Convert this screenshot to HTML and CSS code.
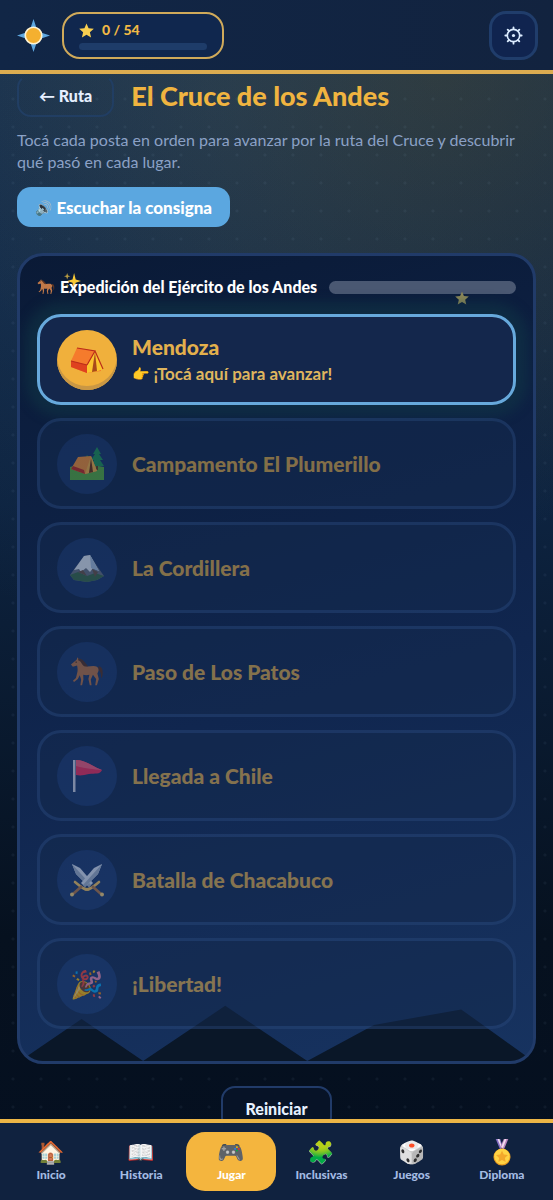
FILE: index.html
```html
<!DOCTYPE html>
<html lang="es">
<head>
<meta charset="utf-8">
<meta name="viewport" content="width=device-width, initial-scale=1">
<title>El Cruce de los Andes</title>
<link rel="stylesheet" href="styles.css">
</head>
<body>
<svg class="defs" aria-hidden="true">
  <defs>
    <symbol id="horse" viewBox="0 0 36 32">
      <path d="M30 10c4 0 5 4 4.500 9-.2 2-1 3-1.500 4 0-4-.5-8-3-9Z" fill="#5a3424"/>
      <path d="M1 8 7 3l1-2.500L9.500 3c3 1.500 5 5 8 7 3 .5 8-1.500 11 .5 2.500 2 2 5 .5 7l1.500 6-2 6.500h-1.800l1-6.500-3.400-4.500-2.300 5 .8 6h-1.800l-1.500-6.500 1-4.500c-2 .6-4.500.6-6.500 0l.2 5-1.400 6h-1.800l.8-6-1.500-4.500-2 4-4 3-1.200-1.200 3.200-3 1.200-5C8.500 14.500 8 11.500 7.500 9L3 10.500Z" fill="#c07848"/>
      <path d="M9 1.800c4.500.4 7 4.200 10 8.200-2.500.8-5 0-6.500-2.800C11.500 5.500 10.500 4 8.500 3.500Z" fill="#5a3424"/>
      <circle cx="6.500" cy="5.500" r=".7" fill="#20120c"/>
    </symbol>
    <symbol id="tent" viewBox="0 0 34 28">
      <path d="M7 2 25 5 31 25 17 27 1 21Z" fill="#f4762b"/>
      <path d="M7 2 25 5 17 19 1 15Z" fill="#f57b2c"/>
      <path d="M1 15 17 19V27L1 21Z" fill="#df421f"/>
      <path d="M25 5 33 23 28 25 17 27V19Z" fill="#fbc52e"/>
      <path d="M25 6 27 25 22 26Z" fill="#a84a1b"/>
      <path d="M7 2 25 5 17 19M1 15 17 19M25 5 33 23" fill="none" stroke="#bb2d1a" stroke-width="1.200"/>
    </symbol>
    <symbol id="camp" viewBox="0 0 34 34">
      <path d="M0 20c10-3 24-2 34 0v13H0Z" fill="#5cb544"/>
      <path d="M26 15h2v8h-2Z" fill="#6b4325"/>
      <path d="M27 0 31 7h-2l4 6h-3l4 6H20l4-6h-3l4-6h-2Z" fill="#219c5e"/>
      <path d="M17 8 22 14h-8Z" fill="#219c5e"/>
      <path d="M8 10 21 9 27 24 15 27 1 22Z" fill="#ff9838"/>
      <path d="M1 22 15 27 14 23 3 19Z" fill="#c93023"/>
      <path d="M21 9 27 24 15 27Z" fill="#ffbb4a"/>
      <path d="M21 11 23 25 19 26Z" fill="#713615"/>
    </symbol>
    <symbol id="mountain" viewBox="0 0 34 28">
      <path d="M0 21 5 14 14 2 20 1 27 12 34 22 27 26 17 28 4 26Z" fill="#6b7688"/>
      <path d="M4 16 14 2 20 1 29 17 23 14 20 18 16 14 11 18 9 15Z" fill="#eaf4ff"/>
      <path d="M20 1 21 14 29 17Z" fill="#acc8e6"/>
      <path d="M0 21 8 18 17 22 25 19 34 22 27 26 17 28 4 26Z" fill="#3d704d"/>
      <path d="M8 18 13 16 17 22ZM22 15 28 18 25 23Z" fill="#6d584b"/>
    </symbol>
    <symbol id="flag" viewBox="0 0 32 34">
      <path d="M2 1h2.500v32H2Z" fill="#d5d9ea"/>
      <path d="M5 1c10 0 15 6 26 10-2 5-7 3-13 4-5 1-8 2-13 1Z" fill="#f8305f"/>
      <path d="M5 1c10 0 15 6 26 10-9-1-15-1-26-4Z" fill="#ff5f80"/>
    </symbol>
    <symbol id="swords" viewBox="0 0 34 34">
      <g id="sword">
        <path d="M2 1 10 5 23 20 19 24 6 11Z" fill="#e0e9f8"/>
        <path d="M2 1 21 22 19 24 6 11Z" fill="#a4b4cc"/>
        <path d="M15 26c4 2 9-3 14-7" fill="none" stroke="#ffcb60" stroke-width="2.600" stroke-linecap="round"/>
        <path d="M22 23 31 31" stroke="#b87b47" stroke-width="2.600"/>
        <circle cx="32" cy="31.500" r="2" fill="#ffd57a"/>
      </g>
      <use href="#sword" transform="matrix(-1 0 0 1 34 0)"/>
    </symbol>
    <symbol id="medal" viewBox="0 0 24 30">
      <path d="M5 0h5l3 9-3 3Z" fill="#8570c4"/>
      <path d="M7 0h2l3 9-1 1Z" fill="#f1dced"/>
      <path d="M19 0h-5l-4 9 4 3Z" fill="#b984bd"/>
      <path d="M17 0h-2l-4 9 2 1Z" fill="#f1dced"/>
      <circle cx="12" cy="20" r="9.500" fill="#e69a20"/>
      <circle cx="12" cy="19.500" r="8.600" fill="#ffd344"/>
      <path d="m12 13 2 4.200 4.600.6-3.400 3.200.9 4.600-4.100-2.300-4.100 2.300.9-4.600L5.400 17.800l4.600-.6Z" fill="#f3a82b"/>
    </symbol>
    <symbol id="sparkles" viewBox="0 0 16 16">
      <path d="M9.500 1 11 7l5 1.500L11 10l-1.500 6L8 10 3 8.500 8 7Z" fill="#f8c936"/>
      <path d="m3 1 .8 2.200L6 4l-2.200.8L3 7l-.8-2.200L0 4l2.200-.8Z" fill="#b69a42"/>
      <path d="m3 11 .6 1.400L5 13l-1.400.6L3 15l-.6-1.400L1 13l1.400-.6Z" fill="#b69a42"/>
    </symbol>
    <symbol id="star" viewBox="0 0 16 16">
      <path d="m8 .5 2.200 5.200 5.600.5-4.200 3.700 1.300 5.600L8 12.600l-4.900 2.900 1.300-5.600L.2 6.200l5.600-.5Z"/>
    </symbol>
  </defs>
</svg>

<header class="topbar">
  <svg class="logo" viewBox="0 0 32 32" aria-hidden="true">
    <path d="M16 0 20 12 32 16 20 20 16 32 12 20 0 16 12 12Z" fill="#5fa8e0"/>
    <circle cx="16" cy="16" r="8" fill="#f4b030" stroke="#fff3d2" stroke-width="1.6"/>
  </svg>
  <div class="score">
    <span class="score-text"><svg class="score-star" aria-hidden="true"><use href="#star"/></svg>0 / 54</span>
    <div class="score-bar"></div>
  </div>
  <button class="settings" type="button" aria-label="Ajustes">
    <svg viewBox="0 0 20 20" fill="none" stroke="#dcecff" aria-hidden="true">
      <circle cx="10" cy="10" r="6.500" stroke-width="1.7"/>
      <path stroke-width="1.9" stroke-linecap="round" d="M10 1.400V3M10 17v1.600M1.400 10H3M17 10h1.600M3.900 3.900 5 5M15 15l1.100 1.100M3.900 16.100 5 15M15 5l1.100-1.100"/>
      <circle cx="10" cy="10" r="1.700" fill="#dcecff" stroke="none"/>
    </svg>
  </button>
</header>

<main class="content">
  <div class="title-row">
    <button class="back" type="button">← Ruta</button>
    <h1 class="title">El Cruce de los Andes</h1>
  </div>
  <p class="intro">Tocá cada posta en orden para avanzar por la ruta del Cruce y descubrir qué pasó en cada lugar.</p>
  <button class="listen" type="button"><span class="speaker">🔊</span>Escuchar la consigna</button>

  <section class="board">
    <div class="mountains"></div>
    <svg class="spark" aria-hidden="true"><use href="#sparkles"/></svg>
    <div class="board-head">
      <svg class="horse" aria-hidden="true"><use href="#horse"/></svg>
      <h2 class="board-title">Expedición del Ejército de los Andes</h2>
      <div class="track"></div>
    </div>
    <svg class="twinkle" aria-hidden="true"><use href="#star"/></svg>
    <ol class="stops">
      <li><button class="stop active" type="button"><span class="disc"><svg aria-hidden="true"><use href="#tent"/></svg></span><span class="stop-text"><span class="stop-name">Mendoza</span><span class="hint"><span class="hand">👉</span>¡Tocá aquí para avanzar!</span></span></button></li>
      <li><button class="stop" type="button" disabled><span class="disc"><svg aria-hidden="true"><use href="#camp"/></svg></span><span class="stop-name">Campamento El Plumerillo</span></button></li>
      <li><button class="stop" type="button" disabled><span class="disc"><svg aria-hidden="true"><use href="#mountain"/></svg></span><span class="stop-name">La Cordillera</span></button></li>
      <li><button class="stop" type="button" disabled><span class="disc"><svg aria-hidden="true"><use href="#horse"/></svg></span><span class="stop-name">Paso de Los Patos</span></button></li>
      <li><button class="stop" type="button" disabled><span class="disc"><svg aria-hidden="true"><use href="#flag"/></svg></span><span class="stop-name">Llegada a Chile</span></button></li>
      <li><button class="stop" type="button" disabled><span class="disc"><svg aria-hidden="true"><use href="#swords"/></svg></span><span class="stop-name">Batalla de Chacabuco</span></button></li>
      <li><button class="stop" type="button" disabled><span class="disc">🎉</span><span class="stop-name">¡Libertad!</span></button></li>
    </ol>
  </section>
  <button class="restart" type="button">Reiniciar</button>
</main>

<nav class="tabs">
  <a class="tab" href="#inicio"><span class="tab-icon">🏠</span>Inicio</a>
  <a class="tab" href="#historia"><span class="tab-icon">📖</span>Historia</a>
  <a class="tab current" href="#jugar" aria-current="page"><span class="tab-icon">🎮</span>Jugar</a>
  <a class="tab" href="#inclusivas"><span class="tab-icon">🧩</span>Inclusivas</a>
  <a class="tab" href="#juegos"><span class="tab-icon">🎲</span>Juegos</a>
  <a class="tab" href="#diploma"><span class="tab-icon"><svg aria-hidden="true"><use href="#medal"/></svg></span>Diploma</a>
</nav>
</body>
</html>
```

FILE: styles.css
```css
* { box-sizing: border-box; }

body {
  margin: 0;
  height: 100vh;
  display: flex;
  flex-direction: column;
  font-family: Lato, "Noto Color Emoji", sans-serif;
  font-size: 16px;
  color: #e6f0ff;
  background:
    radial-gradient(circle at 13px 15px, rgba(160, 190, 230, .06) 1px, transparent 2px) 0 0 / 28px 28px,
    radial-gradient(ellipse 520px 460px at 80% 6%, rgba(100, 80, 20, .28), transparent),
    radial-gradient(ellipse 520px 560px at 40% 8%, rgba(90, 140, 180, .13), transparent),
    linear-gradient(#172f4c, #0d2340 42%, #06111f 78%, #040f20);
}

.defs {
  position: absolute;
  width: 0;
  height: 0;
}

button { font: inherit; color: inherit; cursor: pointer; }

.topbar {
  flex: none;
  display: flex;
  align-items: center;
  gap: 12px;
  padding: 11px 15px 10px 17px;
  border-bottom: 4px solid #dcac50;
  background: linear-gradient(90deg, #112646, #12233f);
}

.logo { width: 33px; height: 33px; }

.score {
  width: 162px;
  height: 47px;
  padding: 8px 15px;
  border: 2px solid #d0aa5a;
  border-radius: 18px;
  background: #10274e;
}

.score-text {
  display: flex;
  align-items: center;
  gap: 8px;
  font-size: 14px;
  line-height: 16px;
  font-weight: 900;
  color: #f0b945;
}

.score-star { width: 15px; height: 15px; fill: #f9cf50; }

.score-bar {
  height: 7px;
  margin-top: 5px;
  border-radius: 4px;
  background: #1e3c69;
}

.settings {
  display: grid;
  place-items: center;
  width: 49px;
  height: 49px;
  margin-left: auto;
  padding: 0;
  border: 3px solid #203d6b;
  border-radius: 17px;
  background: #10244f;
}

.settings svg { width: 19px; height: 19px; }

.content {
  flex: 1;
  min-height: 0;
  overflow-y: auto;
  scrollbar-width: none;
  padding: 0 17px 24px;
}

.title-row {
  display: flex;
  align-items: center;
  gap: 17px;
}

.back {
  height: 43px;
  padding: 0 20px;
  border: 2px solid #213e63;
  border-top-color: transparent;
  border-radius: 14px;
  background: none;
  font-weight: 900;
}

.title {
  margin: 0;
  font-size: 27px;
  line-height: 42px;
  font-weight: 900;
  color: #f0b440;
}

.intro {
  margin: 12px 0 14px;
  line-height: 22px;
  color: #8ba1c6;
}

.listen {
  display: flex;
  align-items: center;
  gap: 4px;
  height: 40px;
  padding: 0 18px;
  border: 0;
  border-radius: 14px;
  background: #5ba7e0;
  color: #fff;
  font-size: 17px;
  font-weight: 900;
}

.speaker { font-size: 14px; }

.board {
  position: relative;
  margin-top: 26px;
  padding: 20px 17px 32px;
  border: 3px solid #213b69;
  border-radius: 26px;
  background: linear-gradient(165deg, #0a1a36, #10264f 55%, #173360);
  overflow: hidden;
}

.mountains {
  position: absolute;
  inset: auto 0 0;
  height: 60px;
  background: #0a1728;
  clip-path: polygon(0 100%, 12% 30%, 24% 100%, 40% 8%, 56% 100%, 69% 40%, 86% 14%, 100% 100%);
}

.spark,
.twinkle { position: absolute; }

.spark {
  left: 44px;
  top: 16px;
  width: 17px;
  height: 17px;
}

.twinkle {
  right: 64px;
  top: 35px;
  width: 14px;
  height: 14px;
  fill: #8f8a58;
}

.board-head {
  position: relative;
  display: flex;
  align-items: center;
}

.board-title {
  margin: 0 12px 0 5px;
  font-size: 16px;
  line-height: 22px;
  font-weight: 900;
  color: #fff;
}

.horse { width: 18px; height: 16px; }

.track {
  flex: 1;
  height: 13px;
  border-radius: 7px;
  background: #4a5872;
}

.stops {
  position: relative;
  display: flex;
  flex-direction: column;
  gap: 13px;
  margin: 16px 0 0;
  padding: 0;
  list-style: none;
}

.stop {
  display: flex;
  align-items: center;
  gap: 15px;
  width: 100%;
  height: 91px;
  padding: 0 17px;
  border: 3px solid #264475;
  border-radius: 24px;
  background: #142a4e;
  text-align: left;
}

.stop:disabled {
  opacity: .55;
  color: inherit;
}

.stop.active {
  border-color: #67a9dc;
  background: #14274c;
  box-shadow: 0 0 12px 12px rgba(18, 60, 72, .45);
}

.disc {
  display: grid;
  place-items: center;
  flex: none;
  width: 60px;
  height: 60px;
  border-radius: 50%;
  background: #1d3b70;
  font-size: 27px;
  line-height: 1;
}

.disc svg { width: 34px; height: 34px; }

.active .disc {
  background: #f0b03c;
  box-shadow: inset 0 -4px #c99744;
}

.stop-text { display: grid; }

.stop-name {
  font-size: 21px;
  line-height: 28px;
  font-weight: 900;
  color: #e3b04c;
}

.hint {
  display: flex;
  align-items: center;
  gap: 4px;
  font-size: 17px;
  line-height: 26px;
  font-weight: 700;
  color: #dfb55e;
}

.hand { font-size: 14px; }

.restart {
  display: block;
  height: 45px;
  margin: 22px auto 0;
  padding: 0 23px;
  border: 2px solid #213b69;
  border-radius: 14px;
  background: #071327;
  font-weight: 900;
}

.tabs {
  flex: none;
  display: grid;
  grid-template-columns: repeat(6, 1fr);
  padding: 9px 6px;
  border-top: 4px solid #ecb546;
  background: #10223f;
}

.tab {
  display: flex;
  flex-direction: column;
  align-items: center;
  padding: 5px 0 8px;
  border-radius: 19px;
  font-size: 12px;
  line-height: 16px;
  font-weight: 900;
  color: #a3bbe3;
  text-decoration: none;
}

.tab.current {
  background: #f4b53e;
  color: #fff;
}

.tab-icon {
  display: grid;
  place-items: center;
  height: 30px;
  font-size: 22px;
  line-height: 30px;
}

.tab-icon svg { width: 24px; height: 27px; }
```
